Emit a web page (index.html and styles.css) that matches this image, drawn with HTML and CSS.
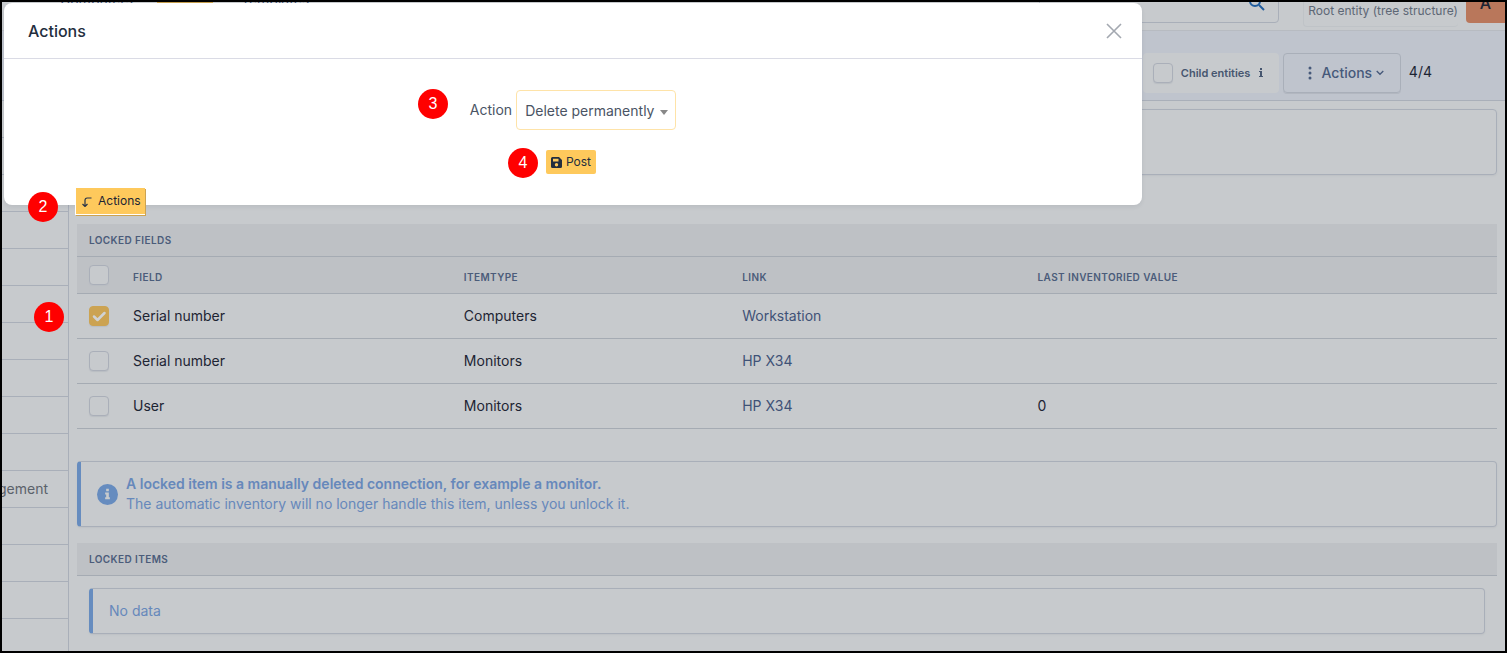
FILE: index.html
```html
<!DOCTYPE html>
<html lang="en">
<head>
<meta charset="utf-8">
<title>Locked fields</title>
<link rel="stylesheet" href="styles.css">
</head>
<body>
<div class="frame">
  <header class="topbar">
    <a class="crumb" href="#">Computers</a>
    <span class="top-add"></span>
    <a class="crumb templates" href="#">Templates</a>
    <div class="search"><svg width="16" height="16" viewBox="0 0 16 16" fill="none" stroke="#1f5c9e" stroke-width="2"><circle cx="6" cy="6" r="5"/><path d="M10 10l5 5"/></svg></div>
    <div class="entity">Root entity (tree structure)</div>
    <div class="avatar">A</div>
  </header>
  <div class="navbar">
    <label class="child"><input class="check" type="checkbox"><span>Child entities</span><svg width="6" height="10" viewBox="0 0 6 10" fill="#46566f"><path d="M2 0h2v2H2zM1 3h3v5h1v1H1V8h1V4H1z"/></svg></label>
    <button class="menu" type="button">
      <svg width="4" height="14" viewBox="0 0 4 14" fill="#46597a"><circle cx="2" cy="2" r="1.500"/><circle cx="2" cy="7" r="1.500"/><circle cx="2" cy="12" r="1.500"/></svg>
      <span>Actions</span>
      <svg width="8" height="6" viewBox="0 0 8 6" fill="none" stroke="#46597a" stroke-width="1.300"><path d="M.7 1L4 4.300 7.300 1"/></svg>
    </button>
    <span class="count">4/4</span>
  </div>
  <div class="layout">
    <nav class="side">
      <div class="side-item"></div><div class="side-item"></div><div class="side-item"></div>
      <div class="side-item"></div><div class="side-item"></div><div class="side-item"></div>
      <div class="side-item"></div><div class="side-item"></div><div class="side-item"></div>
      <div class="side-item"></div><a class="side-item" href="#">gement</a>
      <div class="side-item"></div><div class="side-item"></div><div class="side-item"></div>
    </nav>
    <main class="main">
      <div class="panel"></div>
      <div class="toolbar">
        <button class="mass" type="button"><svg width="11" height="11" viewBox="0 0 11 11" fill="none" stroke="#2b3548" stroke-width="1.200"><path d="M10.500 2H6.200Q4 2 4 4.200V10.500M1.500 8L4 10.500 6.500 8"/></svg><span>Actions</span></button>
      </div>
      <table class="table">
        <colgroup><col class="c-check"><col class="c-field"><col class="c-type"><col class="c-link"><col></colgroup>
        <thead>
          <tr class="title"><th colspan="5">Locked fields</th></tr>
          <tr class="heads"><th><input class="check" type="checkbox" aria-label="Select all"></th><th>Field</th><th>Itemtype</th><th>Link</th><th>Last inventoried value</th></tr>
        </thead>
        <tbody>
          <tr><td><input class="check" type="checkbox" checked aria-label="Select serial number, computers"></td><td>Serial number</td><td>Computers</td><td><a href="#">Workstation</a></td><td></td></tr>
          <tr><td><input class="check" type="checkbox" aria-label="Select serial number, monitors"></td><td>Serial number</td><td>Monitors</td><td><a href="#">HP X34</a></td><td></td></tr>
          <tr><td><input class="check" type="checkbox" aria-label="Select user"></td><td>User</td><td>Monitors</td><td><a href="#">HP X34</a></td><td>0</td></tr>
        </tbody>
      </table>
      <div class="alert">
        <svg width="21" height="21" viewBox="0 0 22 22"><circle cx="11" cy="11" r="11" fill="#668cbf"/><path fill="#c7cacd" d="M9.600 5h2.800v2.600H9.600zM8.500 9h3.900v5h1.100v2h-5v-2h1.100v-3H8.500z"/></svg>
        <div><strong>A locked item is a manually deleted connection, for example a monitor.</strong><br>The automatic inventory will no longer handle this item, unless you unlock it.</div>
      </div>
      <h2 class="section">Locked items</h2>
      <div class="alert empty">No data</div>
    </main>
  </div>
  <section class="modal" role="dialog" aria-labelledby="modal-title">
    <div class="modal-head">
      <h1 id="modal-title">Actions</h1>
      <button class="close" type="button" aria-label="Close"><svg width="16" height="16" viewBox="0 0 16 16" fill="none" stroke="#a3a8b0" stroke-width="1.600"><path d="M1 1l14 14M15 1L1 15"/></svg></button>
    </div>
    <form class="modal-body">
      <div class="field">
        <label for="action">Action</label>
        <div class="select-wrap">
          <select id="action"><option>Delete permanently</option></select>
          <svg class="caret" width="8" height="5" viewBox="0 0 8 5" fill="#888"><path d="M0 0h8L4 5z"/></svg>
        </div>
      </div>
      <button class="post" type="button"><svg width="11" height="11" viewBox="0 0 11 11"><path fill="#232e3e" fill-rule="evenodd" d="M1.500 0H8l3 3v6.500A1.500 1.500 0 0 1 9.500 11h-8A1.500 1.500 0 0 1 0 9.500v-8A1.500 1.500 0 0 1 1.500 0zM2 1.700V4.500h5.500V1.700zM5.500 6a1.700 1.700 0 1 0 0 3.400 1.700 1.700 0 0 0 0-3.400z"/></svg><span>Post</span></button>
    </form>
  </section>
  <span class="badge b1">1</span>
  <span class="badge b2">2</span>
  <span class="badge b3">3</span>
  <span class="badge b4">4</span>
</div>
</body>
</html>
```
FILE: styles.css
```css
* { box-sizing: border-box; }
body { margin: 0; font: 14px/20px Inter, sans-serif; color: #1d2433; background: #c7cacd; }
button, select { font: inherit; color: inherit; margin: 0; }
a { color: #3f5277; text-decoration: none; }
.frame { position: relative; min-height: 100vh; border: 2px solid #000; display: flex; flex-direction: column; overflow: hidden; }

.topbar { height: 29px; display: flex; align-items: flex-end; overflow: hidden; border-bottom: 1px solid #b7bbc1; }
.crumb { width: 97px; margin: 0 0 20px 58px; }
.templates { width: auto; margin: 0 auto 20px 28px; }
.top-add { width: 56px; height: 36px; margin-bottom: 26px; background: #c79f4c; }
.search { width: 240px; height: 36px; margin-bottom: 7px; padding: 7px 13px; border: 1px solid #a9afb9; border-radius: 4px; display: flex; justify-content: flex-end; }
.entity { margin: 0 8px 3px 24px; padding: 8px 0 5px 4px; border: 1px solid #bfc3c7; border-width: 0 0 1px 1px; border-radius: 4px; font-size: 12px; color: #5d6775; }
.avatar { width: 39px; height: 40px; margin-bottom: 7px; border-radius: 4px 0 0 4px; background: #b9775b; text-align: center; line-height: 40px; font-size: 16px; font-weight: 500; }

.navbar { height: 70px; display: flex; align-items: flex-end; justify-content: flex-end; padding: 0 73px 7px 0; background: #bfc4cd; border-bottom: 1px solid #a9afb9; }
.child { height: 40px; width: 136px; margin-right: 4px; padding: 0 8px 0 10px; display: flex; align-items: center; gap: 8px; border-radius: 4px; background: #c7cacd; font-size: 11px; font-weight: 600; color: #46566f; white-space: nowrap; }
.menu { height: 40px; width: 118px; margin-right: 8px; padding: 0 0 0 8px; display: flex; align-items: center; justify-content: center; gap: 4px; border: 1px solid #a9afb9; border-radius: 4px; background: none; color: #46597a; font-weight: 500; box-shadow: 0 1px 0 #b2b7c0; }
.menu span { margin-left: 6px; }
.count { line-height: 42px; }

.check { appearance: none; flex: none; display: block; width: 20px; height: 20px; margin: 0; border: 1px solid #aaafb9; border-radius: 4px; background: #c7cacd; box-shadow: 0 1px 1px #b9bdc3; }
.check:checked { border-color: #cca352; background: #cca352 url("data:image/svg+xml,%3Csvg xmlns='http://www.w3.org/2000/svg' viewBox='0 0 18 18'%3E%3Cpath d='M4 9.500l3.500 3.500 7-7' fill='none' stroke='%23d0d2d3' stroke-width='2.500' stroke-linecap='round' stroke-linejoin='round'/%3E%3C/svg%3E") center / 18px; }

.layout { flex: 1; display: flex; }
.side { width: 67px; flex: none; border-right: 1px solid #a9afb9; }
.side-item { height: 37px; display: flex; align-items: center; justify-content: flex-end; padding-right: 20px; border-bottom: 1px solid #a9afb9; overflow: hidden; color: #5b626b; }
.main { flex: 1; min-width: 0; padding: 8px 8px 17px; }
.panel { height: 66px; border: 1px solid #a9afb9; border-radius: 4px; box-shadow: 0 1px 2px #bdc0c4; }
.toolbar { display: flex; padding: 13px 0 9px; margin-left: -2px; }
.mass { position: relative; z-index: 3; height: 27px; padding: 0 4px 0 5px; display: flex; align-items: center; gap: 6px; border: 1px solid #fff; border-width: 0 0 1px 1px; background: #fec95c; font-size: 12px; box-shadow: 1px 1px 0 #cca352; }

.table { width: 100%; table-layout: fixed; border-collapse: separate; border-spacing: 0; }
.c-check { width: 44px; }
.c-field { width: 23.3%; }
.c-type { width: 19.6%; }
.c-link { width: 20.8%; }
.table th, .table td { padding: 0 12px; text-align: left; border-bottom: 1px solid #a5abb3; }
.table th, .section { height: 33px; background: #bec1c5; font-size: 10px; font-weight: 600; letter-spacing: 0.4px; text-transform: uppercase; color: #4b5c7a; }
.table .heads th { height: 37px; }
.table .heads th + th { padding-top: 4px; }
.table td { height: 45px; }

.alert { display: flex; align-items: center; gap: 8px; margin-top: 32px; padding: 12px 16px; border: 1px solid #a9afb9; border-left: 4px solid #668cbf; border-radius: 4px; box-shadow: 0 1px 2px #bdc0c4; color: #6688bb; }
.alert strong { font-weight: 600; }
.section { margin: 16px 0 0; padding: 0 12px; line-height: 32px; border-bottom: 1px solid #a5abb3; }
.empty { margin: 12px 12px 0; }

.modal { position: absolute; z-index: 2; left: 2px; right: 363px; top: 1px; border-radius: 8px; background: #fff; box-shadow: 0 2px 4px rgba(30, 41, 59, 0.08); }
.modal-head { height: 56px; display: flex; align-items: center; justify-content: space-between; padding: 0 20px 0 24px; border-bottom: 1px solid #dadbe5; }
.modal h1 { margin: 0; font-size: 16px; font-weight: 500; color: #232e3e; }
.close { padding: 0; border: 0; background: none; display: flex; }
.modal-body { display: flex; flex-direction: column; align-items: center; gap: 20px; padding: 31px 0; color: #4a5464; }
.field { display: flex; align-items: center; gap: 4px; }
.select-wrap { position: relative; }
.select-wrap select { appearance: none; width: 160px; height: 40px; padding: 2px 8px 0; border: 1px solid #fee3a8; border-radius: 4px; background: #fff; display: block; }
.caret { position: absolute; right: 8px; top: 20px; }
.post { height: 24px; margin-right: 4px; padding: 0 5px; display: flex; align-items: center; gap: 4px; border: 0; border-radius: 2px; background: #fec95c; font-size: 12px; color: #232e3e; }

.badge { position: absolute; z-index: 4; width: 30px; height: 30px; border-radius: 50%; background: #f00; color: #fff; font: 16px/30px "Liberation Sans", Arial, sans-serif; text-align: center; }
.b1 { left: 32px; top: 300px; }
.b2 { left: 26px; top: 190px; }
.b3 { left: 416px; top: 87px; }
.b4 { left: 506px; top: 146px; }
```
